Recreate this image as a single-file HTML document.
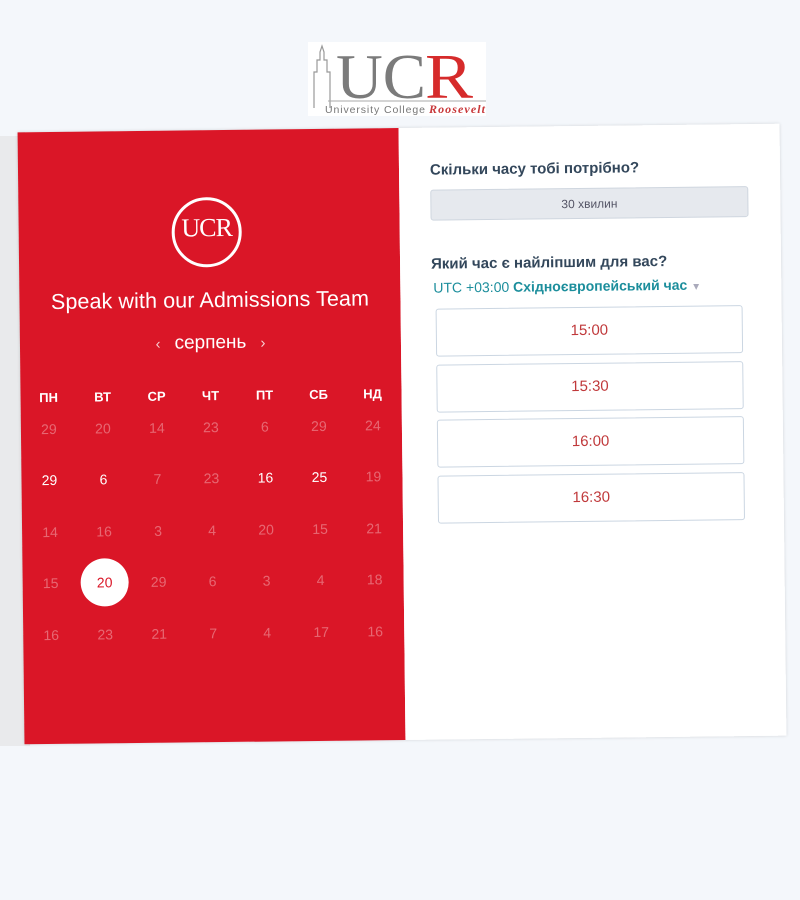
<!DOCTYPE html>
<html><head><meta charset="utf-8"><style>
body{margin:0;width:800px;height:900px;background:#f4f7fb;font-family:"Liberation Sans","DejaVu Sans",sans-serif;overflow:hidden;position:relative}
.shade{position:absolute;left:0;top:136px;width:30px;height:610px;background:#e9eaec}
.logo{position:absolute;left:308px;top:42px;width:178px;height:74px;background:#fff}
.card{position:absolute;left:21px;top:128px;width:762px;height:612px;transform:rotate(-0.65deg);box-shadow:0 0 3px rgba(0,0,0,.15)}
.red{position:absolute;left:0;top:0;width:381px;height:612px;background:#da1627;color:#fff}
.white{position:absolute;left:381px;top:0;width:381px;height:612px;background:#fff}
.circ{position:absolute;left:153px;top:67px;width:70px;height:70px;border:3px solid #fff;border-radius:50%;box-sizing:border-box;text-align:center}
.title{position:absolute;left:0;width:381px;top:158px;text-align:center;font-size:21.5px;font-family:"Liberation Sans",sans-serif;letter-spacing:.1px}
.month{position:absolute;left:0;width:381px;top:202px;text-align:center;font-size:19px}
.g{position:absolute;width:40px;text-align:center;font-size:14px}
.h{font-weight:bold;font-size:13px}
.f{color:rgba(255,255,255,.35)}
.sel{background:#fff;color:#da1627;border-radius:50%;width:48px;height:48px;line-height:48px}
.q{position:absolute;left:31px;font-size:15px;font-weight:bold;color:#33475b}
.btn{position:absolute;left:31px;top:62px;width:318px;height:31px;background:#e6e9ee;border:1px solid #cfd6df;border-radius:3px;box-sizing:border-box;text-align:center;line-height:30px;font-size:12px;color:#556;}
.tz{position:absolute;left:33px;top:152px;font-size:14px;color:#1c8e9c}
.slot{position:absolute;left:35px;width:307px;height:48px;border:1px solid #cbd6e2;border-radius:3px;box-sizing:border-box;text-align:center;line-height:46px;color:#c0393b;font-size:15px}
</style></head><body>
<div class="shade"></div>
<div class="logo">
<svg width="178" height="74" viewBox="0 0 178 74">
<path d="M6 66V30h3V18h3V10l2-6 2 6v8h3v12h3v36" fill="none" stroke="#999" stroke-width="1.2"/>
<text x="28" y="56" font-family="Liberation Serif,serif" font-size="64" fill="#7b7b7b" textLength="90" lengthAdjust="spacingAndGlyphs">UC</text>
<text x="117" y="56" font-family="Liberation Serif,serif" font-size="64" fill="#d62b2b" textLength="48" lengthAdjust="spacingAndGlyphs">R</text>
<line x1="20" y1="59" x2="178" y2="59" stroke="#aaa" stroke-width="1"/>
<text x="17" y="71" font-size="10.5" fill="#777" font-family="Liberation Sans,sans-serif" textLength="100">University College</text>
<text x="121" y="71" font-size="12" fill="#c8383a" font-style="italic" font-weight="bold" font-family="Liberation Serif,serif" textLength="56">Roosevelt</text>
</svg></div>
<div class="card">
<div class="red">
<div class="circ"><div style="font-family:'Liberation Serif',serif;font-size:26px;margin-top:13px;letter-spacing:-1px">UCR</div></div>
<div class="title">Speak with our Admissions Team</div>
<div class="month"><span style="font-size:15px;opacity:.8;margin-right:14px">‹</span>серпень<span style="font-size:15px;opacity:.8;margin-left:14px">›</span></div>
<div class="g h" style="left:8px;top:258px">ПН</div><div class="g h" style="left:62px;top:258px">ВТ</div><div class="g h" style="left:116px;top:258px">СР</div><div class="g h" style="left:170px;top:258px">ЧТ</div><div class="g h" style="left:224px;top:258px">ПТ</div><div class="g h" style="left:278px;top:258px">СБ</div><div class="g h" style="left:332px;top:258px">НД</div>

<div class="g f" style="left:8px;top:289px">29</div><div class="g f" style="left:62px;top:289px">20</div><div class="g f" style="left:116px;top:289px">14</div><div class="g f" style="left:170px;top:289px">23</div><div class="g f" style="left:224px;top:289px">6</div><div class="g f" style="left:278px;top:289px">29</div><div class="g f" style="left:332px;top:289px">24</div>

<div class="g" style="left:8px;top:340px">29</div><div class="g" style="left:62px;top:340px">6</div><div class="g f" style="left:116px;top:340px">7</div><div class="g f" style="left:170px;top:340px">23</div><div class="g" style="left:224px;top:340px">16</div><div class="g" style="left:278px;top:340px">25</div><div class="g f" style="left:332px;top:340px">19</div>

<div class="g f" style="left:8px;top:392px">14</div><div class="g f" style="left:62px;top:392px">16</div><div class="g f" style="left:116px;top:392px">3</div><div class="g f" style="left:170px;top:392px">4</div><div class="g f" style="left:224px;top:392px">20</div><div class="g f" style="left:278px;top:392px">15</div><div class="g f" style="left:332px;top:392px">21</div>

<div class="g f" style="left:8px;top:443px">15</div><div class="g sel" style="left:58px;top:427px">20</div><div class="g f" style="left:116px;top:443px">29</div><div class="g f" style="left:170px;top:443px">6</div><div class="g f" style="left:224px;top:443px">3</div><div class="g f" style="left:278px;top:443px">4</div><div class="g f" style="left:332px;top:443px">18</div>

<div class="g f" style="left:8px;top:495px">16</div><div class="g f" style="left:62px;top:495px">23</div><div class="g f" style="left:116px;top:495px">21</div><div class="g f" style="left:170px;top:495px">7</div><div class="g f" style="left:224px;top:495px">4</div><div class="g f" style="left:278px;top:495px">17</div><div class="g f" style="left:332px;top:495px">16</div>
</div>
<div class="white">
<div class="q" style="top:34px">Скільки часу тобі потрібно?</div>
<div class="btn">30 хвилин</div>
<div class="q" style="top:128px">Який час є найліпшим для вас?</div>
<div class="tz">UTC +03:00 <b>Східноєвропейський час</b> <span style="color:#aab;font-size:10px">▼</span></div>
<div class="slot" style="top:181px">15:00</div>
<div class="slot" style="top:237px">15:30</div>
<div class="slot" style="top:292px">16:00</div>
<div class="slot" style="top:348px">16:30</div>
</div>
</div>
</body></html>
